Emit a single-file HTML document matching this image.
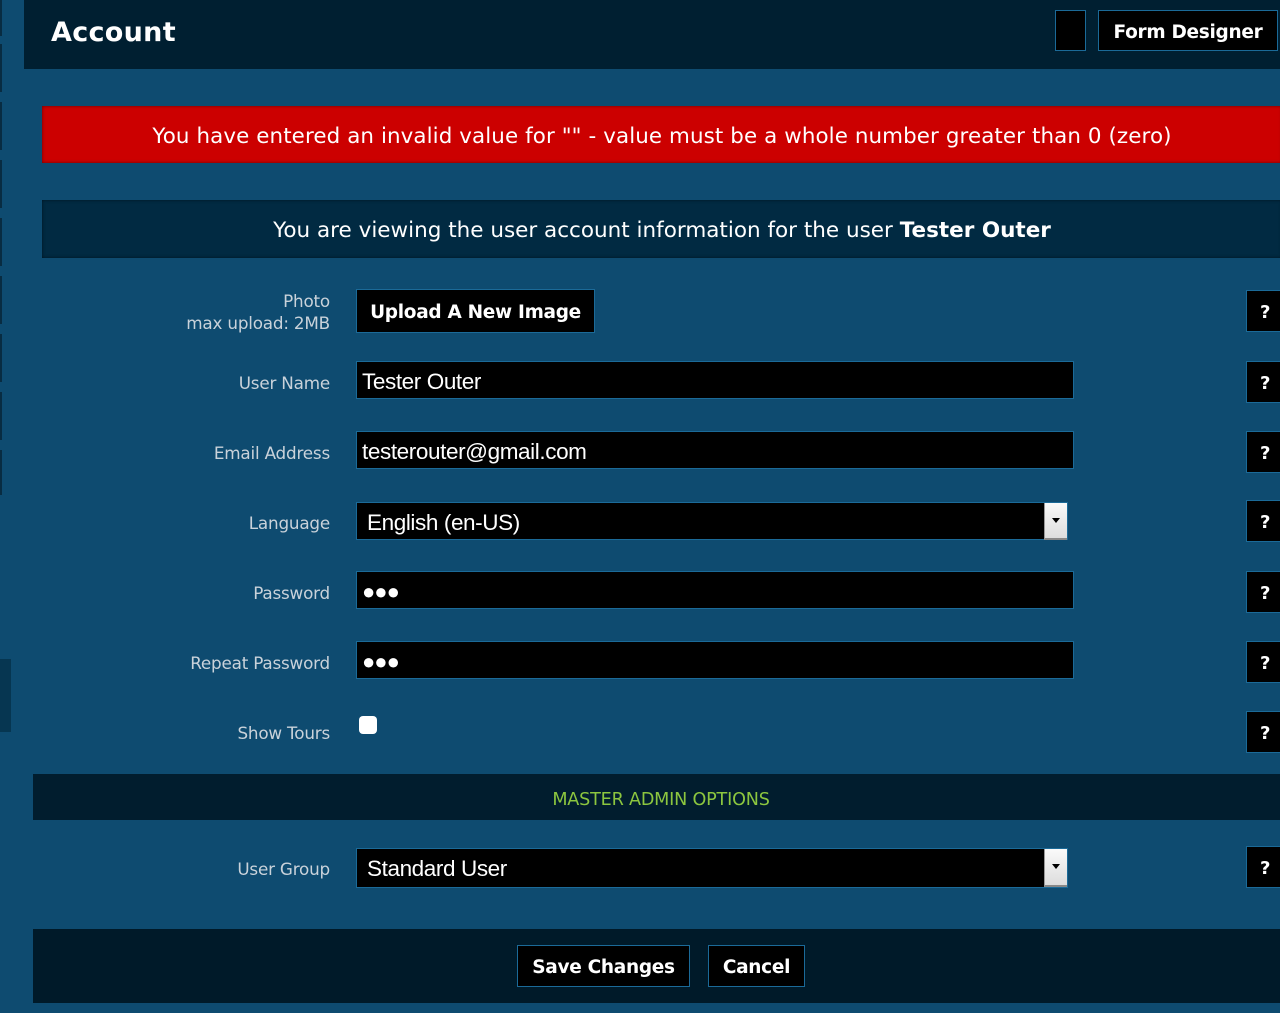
<!DOCTYPE html>
<html><head><meta charset="utf-8"><style>
*{box-sizing:border-box;margin:0;padding:0}
body{width:1280px;height:1013px;background:#0e4b70;position:relative;overflow:hidden;font-family:"DejaVu Sans","Liberation Sans",sans-serif;color:#fff}
.a{position:absolute}
.dash{position:absolute;left:0;width:2px;height:48px;background:#082c42}
.btn{position:absolute;background:#000;border:1px solid #1b6a98;color:#fff;font-weight:bold;font-size:18.5px;display:flex;align-items:center;justify-content:center;letter-spacing:-0.3px;padding-top:3px}
.lbl{position:absolute;right:950px;text-align:right;font-size:16.8px;color:#c9d2da;line-height:22px;letter-spacing:-0.2px}
.inp{position:absolute;left:356px;width:718px;height:38px;background:#000;border:1px solid #1b6a98;font-family:"Liberation Sans",sans-serif;font-size:22.5px;color:#fff;padding-left:5px;line-height:39px;letter-spacing:-0.4px}
.sel{width:712px;padding-left:10px}
.arr{position:absolute;right:0;top:0;width:23px;height:37px;background:linear-gradient(#fafafa,#ddd);border-left:1px solid #999;border-bottom:2px solid #888}
.arr:after{content:"";position:absolute;left:7px;top:15px;border:4px solid transparent;border-top:5px solid #000}
.q{position:absolute;left:1246px;width:40px;height:42px;background:#000;border:1px solid #1b6a98;font-weight:bold;font-size:18px;padding-left:13px;line-height:44px}
</style></head><body>
<div class="dash" style="top:0;height:36px"></div>
<div class="dash" style="top:44px"></div><div class="dash" style="top:102px"></div><div class="dash" style="top:160px"></div><div class="dash" style="top:218px"></div><div class="dash" style="top:276px"></div><div class="dash" style="top:334px"></div><div class="dash" style="top:392px"></div><div class="dash" style="top:450px;height:45px"></div>
<div class="a" style="left:0;top:659px;width:11px;height:73px;background:#063651"></div>

<div class="a" style="left:24px;top:0;width:1256px;height:69px;background:#001f31"></div>
<div class="a" style="left:51px;top:17px;font-size:27px;font-weight:bold;letter-spacing:0.3px">Account</div>
<div class="btn" style="left:1055px;top:10px;width:31px;height:41px"></div>
<div class="btn" style="left:1098px;top:10px;width:180px;height:41px">Form Designer</div>

<div class="a" style="left:42px;top:106px;width:1240px;height:57px;background:#cc0000;box-shadow:inset 0 0 3px #600;font-size:21.4px;line-height:61px;text-align:center;letter-spacing:0.1px">You have entered an invalid value for "" - value must be a whole number greater than 0 (zero)</div>

<div class="a" style="left:42px;top:200px;width:1240px;height:58px;background:#012a42;box-shadow:inset 0 0 3px #00131f;font-size:21.5px;line-height:62px;text-align:center">You are viewing the user account information for the user <b>Tester Outer</b></div>

<div class="lbl" style="top:290px">Photo<br>max upload: 2MB</div>
<div class="btn" style="left:356px;top:289px;width:239px;height:44px">Upload A New Image</div>
<div class="q" style="top:290px">?</div>

<div class="lbl" style="top:372px">User Name</div>
<div class="inp" style="top:361px">Tester Outer</div>
<div class="q" style="top:361px">?</div>

<div class="lbl" style="top:442px">Email Address</div>
<div class="inp" style="top:431px">testerouter@gmail.com</div>
<div class="q" style="top:431px">?</div>

<div class="lbl" style="top:512px">Language</div>
<div class="inp sel" style="top:502px">English (en-US)<div class="arr"></div></div>
<div class="q" style="top:500px">?</div>

<div class="lbl" style="top:582px">Password</div>
<div class="inp" style="top:571px;font-size:22px;letter-spacing:-1px">●●●</div>
<div class="q" style="top:571px">?</div>

<div class="lbl" style="top:652px">Repeat Password</div>
<div class="inp" style="top:641px;font-size:22px;letter-spacing:-1px">●●●</div>
<div class="q" style="top:641px">?</div>

<div class="lbl" style="top:722px">Show Tours</div>
<div class="a" style="left:359px;top:716px;width:18px;height:18px;background:#fff;border-radius:4px"></div>
<div class="q" style="top:711px">?</div>

<div class="a" style="left:33px;top:774px;width:1250px;height:46px;background:#011d2e;color:#8cc63f;font-size:17.6px;line-height:52px;text-align:center;padding-left:6px;letter-spacing:-0.2px">MASTER ADMIN OPTIONS</div>

<div class="lbl" style="top:858px">User Group</div>
<div class="inp sel" style="top:848px;height:40px">Standard User<div class="arr" style="height:38px"></div></div>
<div class="q" style="top:846px">?</div>

<div class="a" style="left:33px;top:929px;width:1250px;height:74px;background:#001a29"></div>
<div class="btn" style="left:517px;top:945px;width:173px;height:42px">Save Changes</div>
<div class="btn" style="left:708px;top:945px;width:97px;height:42px">Cancel</div>
</body></html>
